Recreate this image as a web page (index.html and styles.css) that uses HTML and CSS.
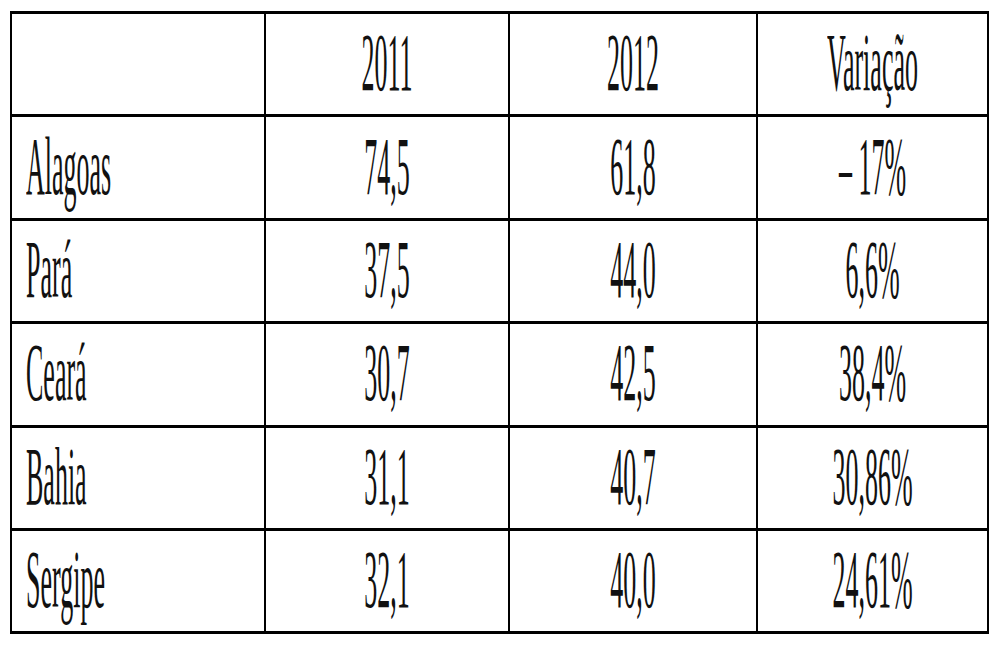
FILE: index.html
```html
<!DOCTYPE html>
<html lang="pt">
  <head>
    <meta charset="UTF-8" />
    <meta name="viewport" content="width=device-width, initial-scale=1.0" />
    <title>Variação por estado</title>
    <link rel="stylesheet" href="styles.css">
  </head>
  <body>
    <table class="data-table">
      <colgroup>
        <col class="col-state" />
        <col class="col-year" />
        <col class="col-year2" />
        <col class="col-var" />
      </colgroup>
      <thead>
        <tr>
          <th></th>
          <th><span class="cell-text">2011</span></th>
          <th><span class="cell-text">2012</span></th>
          <th><span class="cell-text">Variação</span></th>
        </tr>
      </thead>
      <tbody>
        <tr>
          <td class="state"><span class="cell-text">Alagoas</span></td>
          <td><span class="cell-text">74,5</span></td>
          <td><span class="cell-text">61,8</span></td>
          <td><span class="cell-text">– 17%</span></td>
        </tr>
        <tr>
          <td class="state"><span class="cell-text">Pará</span></td>
          <td><span class="cell-text">37,5</span></td>
          <td><span class="cell-text">44,0</span></td>
          <td><span class="cell-text">6,6%</span></td>
        </tr>
        <tr>
          <td class="state"><span class="cell-text">Ceará</span></td>
          <td><span class="cell-text">30,7</span></td>
          <td><span class="cell-text">42,5</span></td>
          <td><span class="cell-text">38,4%</span></td>
        </tr>
        <tr>
          <td class="state"><span class="cell-text">Bahia</span></td>
          <td><span class="cell-text">31,1</span></td>
          <td><span class="cell-text">40,7</span></td>
          <td><span class="cell-text">30,86%</span></td>
        </tr>
        <tr>
          <td class="state"><span class="cell-text">Sergipe</span></td>
          <td><span class="cell-text">32,1</span></td>
          <td><span class="cell-text">40,0</span></td>
          <td><span class="cell-text">24,61%</span></td>
        </tr>
      </tbody>
    </table>
  </body>
</html>
```

FILE: styles.css
```css
/* Page */
body {
  margin: 0;
  padding: 11px 0 0 10px;
  background-color: #fff;
  font-family: "Liberation Serif", "Times New Roman", serif;
  color: #111;
}

/* Table */
.data-table {
  border-collapse: collapse;
  table-layout: fixed;
  width: 977px;
}

.col-state {
  width: 254px;
}

.col-year {
  width: 244px;
}

.col-year2 {
  width: 248px;
}

.col-var {
  width: 231px;
}

.data-table th,
.data-table td {
  border-top: 3px solid #000;
  border-bottom: 3px solid #000;
  border-left: 2px solid #000;
  border-right: 2px solid #000;
  height: 100.4px;
  padding: 0 14px;
  font-size: 26px;
  font-weight: normal;
  text-align: center;
  vertical-align: middle;
}

.data-table td.state {
  text-align: left;
}

/* Tall, narrow lettering */
.cell-text {
  display: inline-block;
  transform: scaleY(3.2);
}
```
